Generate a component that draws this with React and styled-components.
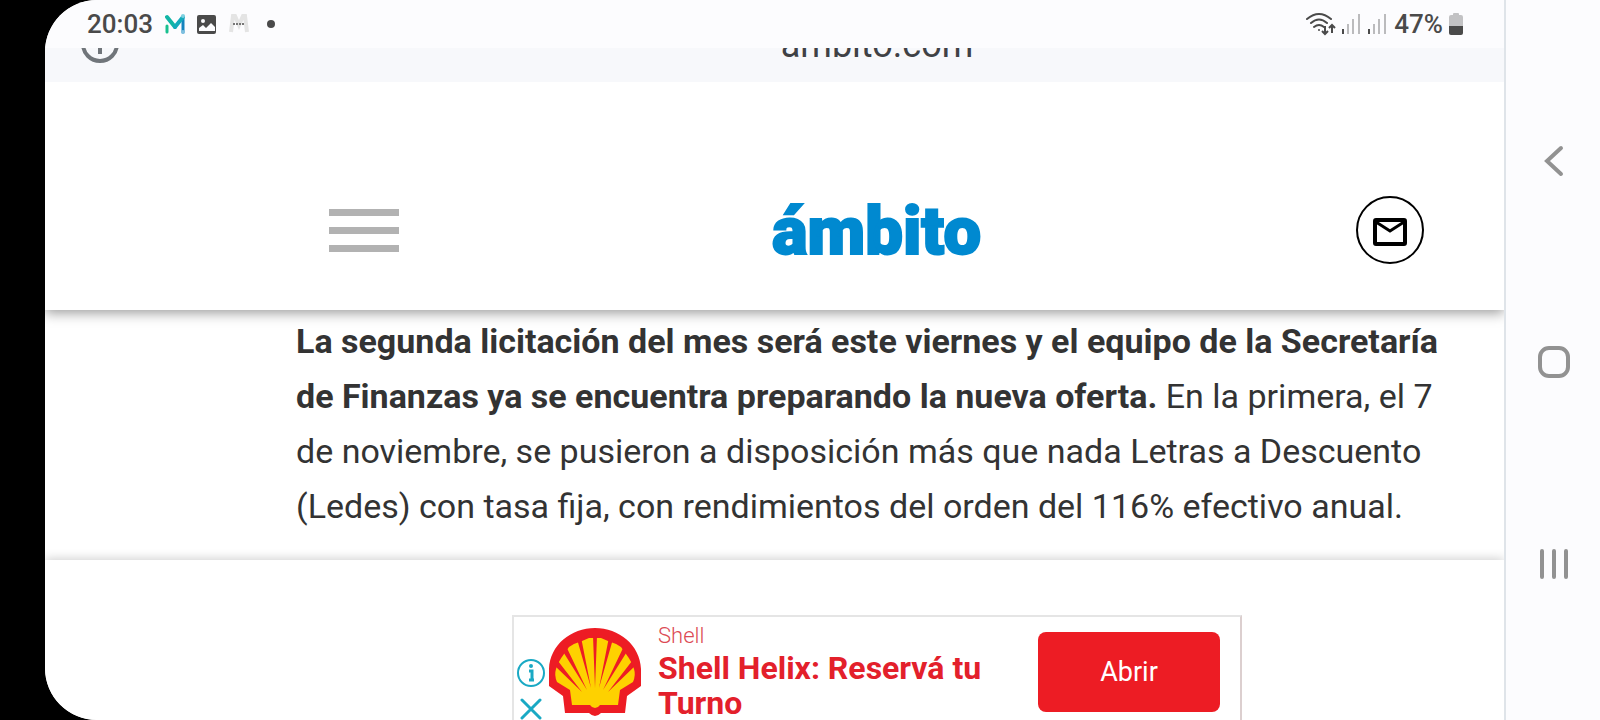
import styled, { createGlobalStyle } from "styled-components";

const GlobalStyle = createGlobalStyle`
  body {
    margin: 0;
    background-color: #000000;
    font-family: Roboto, sans-serif;
  }
`;

const Device = styled.div`
  display: flex;
  height: 100vh;
  padding-left: 45px;
  box-sizing: border-box;
  overflow: hidden;
`;

const Screen = styled.div`
  flex: 1;
  min-width: 0;
  display: flex;
  flex-direction: column;
  background-color: #ffffff;
  border-radius: 52px 0px 0px 52px;
  overflow: hidden;
`;

const StatusBar = styled.div`
  height: 48px;
  flex-shrink: 0;
  display: flex;
  align-items: center;
  justify-content: space-between;
  padding: 0px 41px 0px 42px;
  box-sizing: border-box;
  background-color: #fcfcfe;
  color: #4a4a4a;
  font-size: 26px;
  font-weight: 500;
`;

const StatusGroup = styled.div`
  display: flex;
  align-items: center;
  gap: ${(props) => props.$gap};
`;

const Dot = styled.div`
  width: 8px;
  height: 8px;
  margin-left: 6px;
  border-radius: 50%;
  background-color: #4a4a4a;
`;

const AddressBar = styled.div`
  height: 34px;
  flex-shrink: 0;
  display: flex;
  align-items: flex-end;
  background-color: #f7f8fb;
  overflow: hidden;
`;

const SiteInfo = styled.button`
  width: 205px;
  flex-shrink: 0;
  display: flex;
  padding: 0px 0px 19px 36px;
  box-sizing: border-box;
  border: none;
  background: none;
`;

const Address = styled.div`
  flex: 1;
  padding-bottom: 16px;
  color: #3f4145;
  font-size: 36px;
  line-height: 42px;
  text-align: center;
`;

const Header = styled.header`
  position: relative;
  flex-shrink: 0;
  display: grid;
  grid-template-columns: 1fr auto 1fr;
  align-items: center;
  height: 228px;
  padding: 68px 80px 0px 284px;
  box-sizing: border-box;
  background-color: #ffffff;
  box-shadow: 0px 3px 12px rgba(0, 0, 0, 0.4);
  /* the shadow only falls below the bar */
  clip-path: inset(0px 0px -20px 0px);
`;

const MenuButton = styled.button`
  width: 70px;
  display: flex;
  flex-direction: column;
  gap: 11px;
  padding: 0px;
  border: none;
  background: none;
`;

const MenuLine = styled.span`
  height: 7px;
  background-color: #b2b2b2;
`;

const Logo = styled.a`
  padding-top: 2px;
  color: #0089d0;
  font-size: 67px;
  font-weight: 900;
  line-height: 76px;
  text-decoration: none;
  -webkit-text-stroke: 2px #0089d0;
`;

const MailButton = styled.button`
  width: 68px;
  height: 68px;
  display: flex;
  align-items: center;
  justify-content: center;
  justify-self: end;
  padding: 4px 0px 0px;
  border: 2px solid #000000;
  border-radius: 50%;
  background-color: #ffffff;
`;

const Article = styled.main`
  flex: 1;
  padding: 4px 46px 0px 251px;
  color: #333333;
`;

const Paragraph = styled.p`
  margin: 0px;
  font-size: 34px;
  line-height: 55px;
`;

const AdBar = styled.aside`
  position: relative;
  height: 160px;
  flex-shrink: 0;
  display: flex;
  justify-content: center;
  padding: 55px 0px 0px 205px;
  box-sizing: border-box;
  background-color: #ffffff;
  box-shadow: 0px -1px 10px rgba(0, 0, 0, 0.2);
`;

const Ad = styled.div`
  width: 730px;
  height: 115px;
  flex-shrink: 0;
  display: flex;
  align-items: flex-start;
  box-sizing: border-box;
  border: 2px solid #e5e5e5;
  border-right: 2px solid #dccfcf;
`;

const AdControls = styled.div`
  display: flex;
  flex-direction: column;
  gap: 11px;
  padding: 42px 0px 0px 3px;
`;

const AdControl = styled.button`
  display: flex;
  padding: 0px;
  border: none;
  background: none;
`;

const ShellLogo = styled.svg`
  margin: 11px 0px 0px 4px;
`;

const AdText = styled.div`
  flex: 1;
  padding: 6px 0px 0px 17px;
  color: #e3202b;
`;

const Advertiser = styled.div`
  color: #dc4a54;
  font-size: 22px;
  font-weight: 300;
  line-height: 26px;
`;

const AdTitle = styled.div`
  width: 340px;
  margin-top: 2px;
  font-size: 32px;
  font-weight: bold;
  line-height: 35px;
`;

const AdButton = styled.button`
  width: 182px;
  height: 80px;
  margin: 15px 20px 0px 0px;
  border: none;
  border-radius: 8px;
  background-color: #ed1c24;
  color: #ffffff;
  font-family: inherit;
  font-size: 27px;
`;

const NavBar = styled.nav`
  width: 96px;
  flex-shrink: 0;
  display: flex;
  flex-direction: column;
  align-items: center;
  justify-content: center;
  gap: 129px;
  padding: 4px 0px 0px 2px;
  box-sizing: border-box;
  border-left: 2px solid #dfe4e9;
  background-color: #fcfcfe;
`;

const NavButton = styled.button`
  width: 72px;
  height: 72px;
  flex-shrink: 0;
  display: flex;
  align-items: center;
  justify-content: center;
  padding: 0px;
  border: none;
  background: none;
`;

const MessageIcon = () => (
  <svg width="20" height="20" viewBox="0 0 20 20" fill="none" strokeLinecap="round">
    <path d="M2 12v6" stroke="#19c08f" strokeWidth="3" />
    <path d="M18 3v15" stroke="#1583bd" strokeWidth="3" />
    <path d="M2 3l8 10" stroke="#12b5a6" strokeWidth="4" />
    <path d="M10 13l8-10" stroke="#13aabb" strokeWidth="4" />
    <circle cx="18" cy="2" r="2" fill="#7fd0e0" />
    <circle cx="18" cy="18" r="2" fill="#7fc0e0" />
  </svg>
);

const PictureIcon = () => (
  <svg width="20" height="20" viewBox="0 0 20 20">
    <rect x="0" y="1" width="19" height="19" rx="2" fill="#4a4a4a" />
    <circle cx="6" cy="7" r="2" fill="#fcfcfe" />
    <path d="M2 17v-3l4-3 3 3 5-5 4 4v4z" fill="#fcfcfe" />
  </svg>
);

const NewsIcon = () => (
  <svg width="20" height="20" viewBox="0 0 20 20" fill="none">
    <path d="M2 18L4 2h2l4 9 4-9h2l2 16" stroke="#e4e4e4" strokeWidth="4" />
    <path d="M4 10h12" stroke="#777777" strokeWidth="2" strokeDasharray="2 1" />
  </svg>
);

const WifiIcon = () => (
  <svg
    width="30"
    height="24"
    viewBox="0 0 30 24"
    fill="none"
    stroke="#4a4a4a"
    strokeWidth="2"
  >
    <path d="M1 7q12-10 24 0M5 11q8-7 16 0M8 15q5-4 10 0" strokeLinecap="round" />
    <circle cx="13" cy="18" r="1" fill="#4a4a4a" stroke="none" />
    <path d="M19 14v8M16 19l3 3 3-3M26 21v-8M23 16l3-3 3 3" />
  </svg>
);

const SignalIcon = () => (
  <svg width="20" height="20" viewBox="0 0 20 20" fill="none" strokeWidth="2">
    <path d="M1 15v5" stroke="#4a4a4a" />
    <path d="M6 10v10M11 5v15M17 0v20" stroke="#bbbbbd" />
  </svg>
);

const BatteryIcon = () => (
  <svg width="14" height="22" viewBox="0 0 14 22">
    <path d="M4 1q0-1 1-1h4q1 0 1 1v1h2q2 0 2 2v9H0V4q0-2 2-2h2z" fill="#c2c2c4" />
    <path d="M0 13h14v7q0 2-2 2H2q-2 0-2-2z" fill="#4a4a4a" />
  </svg>
);

const Shell = () => (
  <ShellLogo width="92" height="88" viewBox="0 0 92 88">
    <path
      d="M46 0C22 0 1 17 0 41v17l14 10 2 17h24q3 3 6 3t6-3h24l2-17 14-10V41C91 17 70 0 46 0z"
      fill="#ed1c24"
    />
    <path
      d="M46 80q-3 0-5-3H23l-2-15L8 54Q5 47 7 41q2-7 8-15l5-7q6-4 13-6l7-3h12l7 3q7 2 13 6l5 7q6 8 8 15 2 6-1 13l-13 8-2 15H51q-2 3-5 3z"
      fill="#fed100"
    />
    <path
      d="M44 8h4L46 60zM28 11l4-2L42 60zM60 9l4 2L50 60zM13 22l4-4L38 62zM75 18l4 4L54 62zM6 38l3-5L33 64zM83 33l3 5L59 64z"
      fill="#ed1c24"
    />
  </ShellLogo>
);

const App = () => {
  return (
    <Device>
      <GlobalStyle />
      <Screen>
        <StatusBar>
          <StatusGroup $gap="12px">
            <time>20:03</time>
            <MessageIcon />
            <PictureIcon />
            <NewsIcon />
            <Dot />
          </StatusGroup>
          <StatusGroup $gap="6px">
            <WifiIcon />
            <SignalIcon />
            <SignalIcon />
            <span>47%</span>
            <BatteryIcon />
          </StatusGroup>
        </StatusBar>
        <AddressBar>
          <SiteInfo aria-label="Información del sitio">
            <svg width="38" height="38" viewBox="0 0 38 38" fill="none">
              <circle cx="19" cy="19" r="17" stroke="#70757a" strokeWidth="4" />
              <path d="M19 17v12" stroke="#70757a" strokeWidth="4" />
            </svg>
          </SiteInfo>
          <Address>ámbito.com</Address>
        </AddressBar>
        <Header>
          <MenuButton aria-label="Menú">
            <MenuLine />
            <MenuLine />
            <MenuLine />
          </MenuButton>
          <Logo href="#">ámbito</Logo>
          <MailButton aria-label="Newsletter">
            <svg width="34" height="28" viewBox="0 0 34 28" fill="none" stroke="#000000">
              <rect x="2" y="2" width="30" height="24" rx="1" strokeWidth="4" />
              <path d="M3 4l14 9 14-9" strokeWidth="3" />
            </svg>
          </MailButton>
        </Header>
        <Article>
          <Paragraph>
            <strong>
              La segunda licitación del mes será este viernes y el equipo de la
              Secretaría de Finanzas ya se encuentra preparando la nueva oferta.
            </strong>{" "}
            En la primera, el 7 de noviembre, se pusieron a disposición más que
            nada Letras a Descuento (Ledes) con tasa fija, con rendimientos del
            orden del 116% efectivo anual.
          </Paragraph>
        </Article>
        <AdBar>
          <Ad>
            <AdControls>
              <AdControl aria-label="Información del anuncio">
                <svg width="28" height="28" viewBox="0 0 28 28" fill="none">
                  <circle cx="14" cy="14" r="13" stroke="#1aa9c4" strokeWidth="2" />
                  <path d="M12 12h3v9M12 21h5" stroke="#1aa9c4" strokeWidth="3" />
                  <circle cx="14" cy="7" r="2" fill="#1aa9c4" />
                </svg>
              </AdControl>
              <AdControl aria-label="Cerrar anuncio">
                <svg width="28" height="22" viewBox="0 0 28 22" fill="none">
                  <path
                    d="M5 2l18 18M23 2L5 20"
                    stroke="#1aa9c4"
                    strokeWidth="3"
                    strokeLinecap="round"
                  />
                </svg>
              </AdControl>
            </AdControls>
            <Shell />
            <AdText>
              <Advertiser>Shell</Advertiser>
              <AdTitle>Shell Helix: Reservá tu Turno</AdTitle>
            </AdText>
            <AdButton>Abrir</AdButton>
          </Ad>
        </AdBar>
      </Screen>
      <NavBar>
        <NavButton aria-label="Atrás">
          <svg width="32" height="32" viewBox="0 0 32 32" fill="none">
            <path
              d="M23 3L9 16l14 13"
              stroke="#929292"
              strokeWidth="4"
              strokeLinecap="round"
            />
          </svg>
        </NavButton>
        <NavButton aria-label="Inicio">
          <svg width="32" height="32" viewBox="0 0 32 32" fill="none">
            <rect x="2" y="2" width="28" height="28" rx="9" stroke="#929292" strokeWidth="4" />
          </svg>
        </NavButton>
        <NavButton aria-label="Recientes">
          <svg width="32" height="32" viewBox="0 0 32 32" fill="none">
            <path d="M4 4v26M16 4v26M28 4v26" stroke="#929292" strokeWidth="4" strokeLinecap="round" />
          </svg>
        </NavButton>
      </NavBar>
    </Device>
  );
};

export default App;
